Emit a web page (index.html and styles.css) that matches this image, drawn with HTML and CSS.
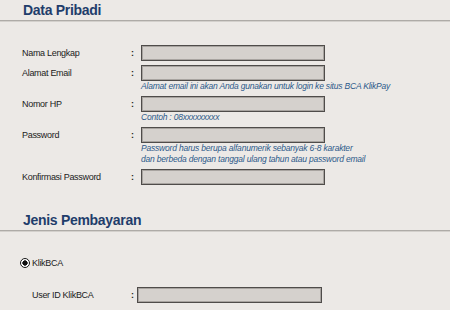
FILE: index.html
```html
<!DOCTYPE html>
<html lang="id">
<head>
<meta charset="utf-8">
<title>Data Pribadi</title>
<link rel="stylesheet" href="styles.css">
</head>
<body>
  <section class="section">
    <h2 class="section-title">Data Pribadi</h2>
    <div class="form form-personal">
      <div class="field first">
        <label class="label">Nama Lengkap</label>
        <span class="colon">:</span>
        <span class="input"></span>
      </div>
      <div class="field">
        <label class="label">Alamat Email</label>
        <span class="colon">:</span>
        <span class="input"></span>
      </div>
      <p class="hint">Alamat email ini akan Anda gunakan untuk login ke situs BCA KlikPay</p>
      <div class="field">
        <label class="label">Nomor HP</label>
        <span class="colon">:</span>
        <span class="input"></span>
      </div>
      <p class="hint">Contoh : 08xxxxxxxxx</p>
      <div class="field">
        <label class="label">Password</label>
        <span class="colon">:</span>
        <span class="input"></span>
      </div>
      <p class="hint">Password harus berupa alfanumerik sebanyak 6-8 karakter<br>dan berbeda dengan tanggal ulang tahun atau password email</p>
      <div class="field">
        <label class="label">Konfirmasi Password</label>
        <span class="colon">:</span>
        <span class="input"></span>
      </div>
    </div>
  </section>

  <section class="section section-payment">
    <h2 class="section-title">Jenis Pembayaran</h2>
    <div class="radio-row">
      <span class="radio"></span>
      <span class="radio-label">KlikBCA</span>
    </div>
    <div class="form form-payment">
      <div class="field">
        <label class="label">User ID KlikBCA</label>
        <span class="colon">:</span>
        <span class="input"></span>
      </div>
    </div>
  </section>
</body>
</html>
```

FILE: styles.css
```css
html, body {
  margin: 0;
  padding: 0;
}

body {
  background: #ece9e6;
  font-family: "Liberation Sans", Arial, sans-serif;
  color: #1b1b1b;
  width: 450px;
  height: 310px;
  overflow: hidden;
}

.section-title {
  margin: 0;
  padding-left: 23px;
  font-size: 14px;
  line-height: 20px;
  font-weight: bold;
  letter-spacing: -0.3px;
  color: #1f3d6b;
  border-bottom: 1px solid #aeaba7;
  box-shadow: 0 1px 0 #d3d0cc;
}

.section-payment {
  margin-top: 25px;
}

.form {
  display: flex;
  flex-direction: column;
}

.form-personal {
  padding-left: 22px;
}

.field {
  display: grid;
  align-items: center;
  margin-top: 4px;
}

.form-personal .field {
  grid-template-columns: 108px 11px 184px;
}

.form-personal .field.first {
  margin-top: 24px;
}

.label {
  font-size: 9px;
  letter-spacing: -0.3px;
  color: #1b1b1b;
}

.colon {
  font-size: 9px;
  font-weight: bold;
  padding-left: 1px;
  color: #222;
}

.input {
  display: block;
  height: 16px;
  box-sizing: border-box;
  background: #d5d1cd;
  border: 1px solid #4f4c4a;
  box-shadow: inset 0 0 0 1px #a8a4a0;
}

.hint {
  margin: 0;
  padding-left: 119px;
  font-size: 8.5px;
  line-height: 11px;
  font-style: italic;
  letter-spacing: -0.2px;
  color: #2d5a8a;
}

.radio-row {
  display: flex;
  align-items: center;
  gap: 2px;
  padding-left: 20px;
  margin-top: 24px;
  height: 16px;
}

.radio {
  display: block;
  width: 10px;
  height: 10px;
  box-sizing: border-box;
  border-radius: 50%;
  border: 1px solid #1a1a1a;
  background: radial-gradient(circle, #111 0 2.4px, #fff 2.9px);
}

.radio-label {
  font-size: 9px;
  letter-spacing: -0.3px;
  color: #1b1b1b;
}

.form-payment {
  padding-left: 32px;
}

.form-payment .field {
  grid-template-columns: 98px 7px 185px;
  margin-top: 16px;
}
```
